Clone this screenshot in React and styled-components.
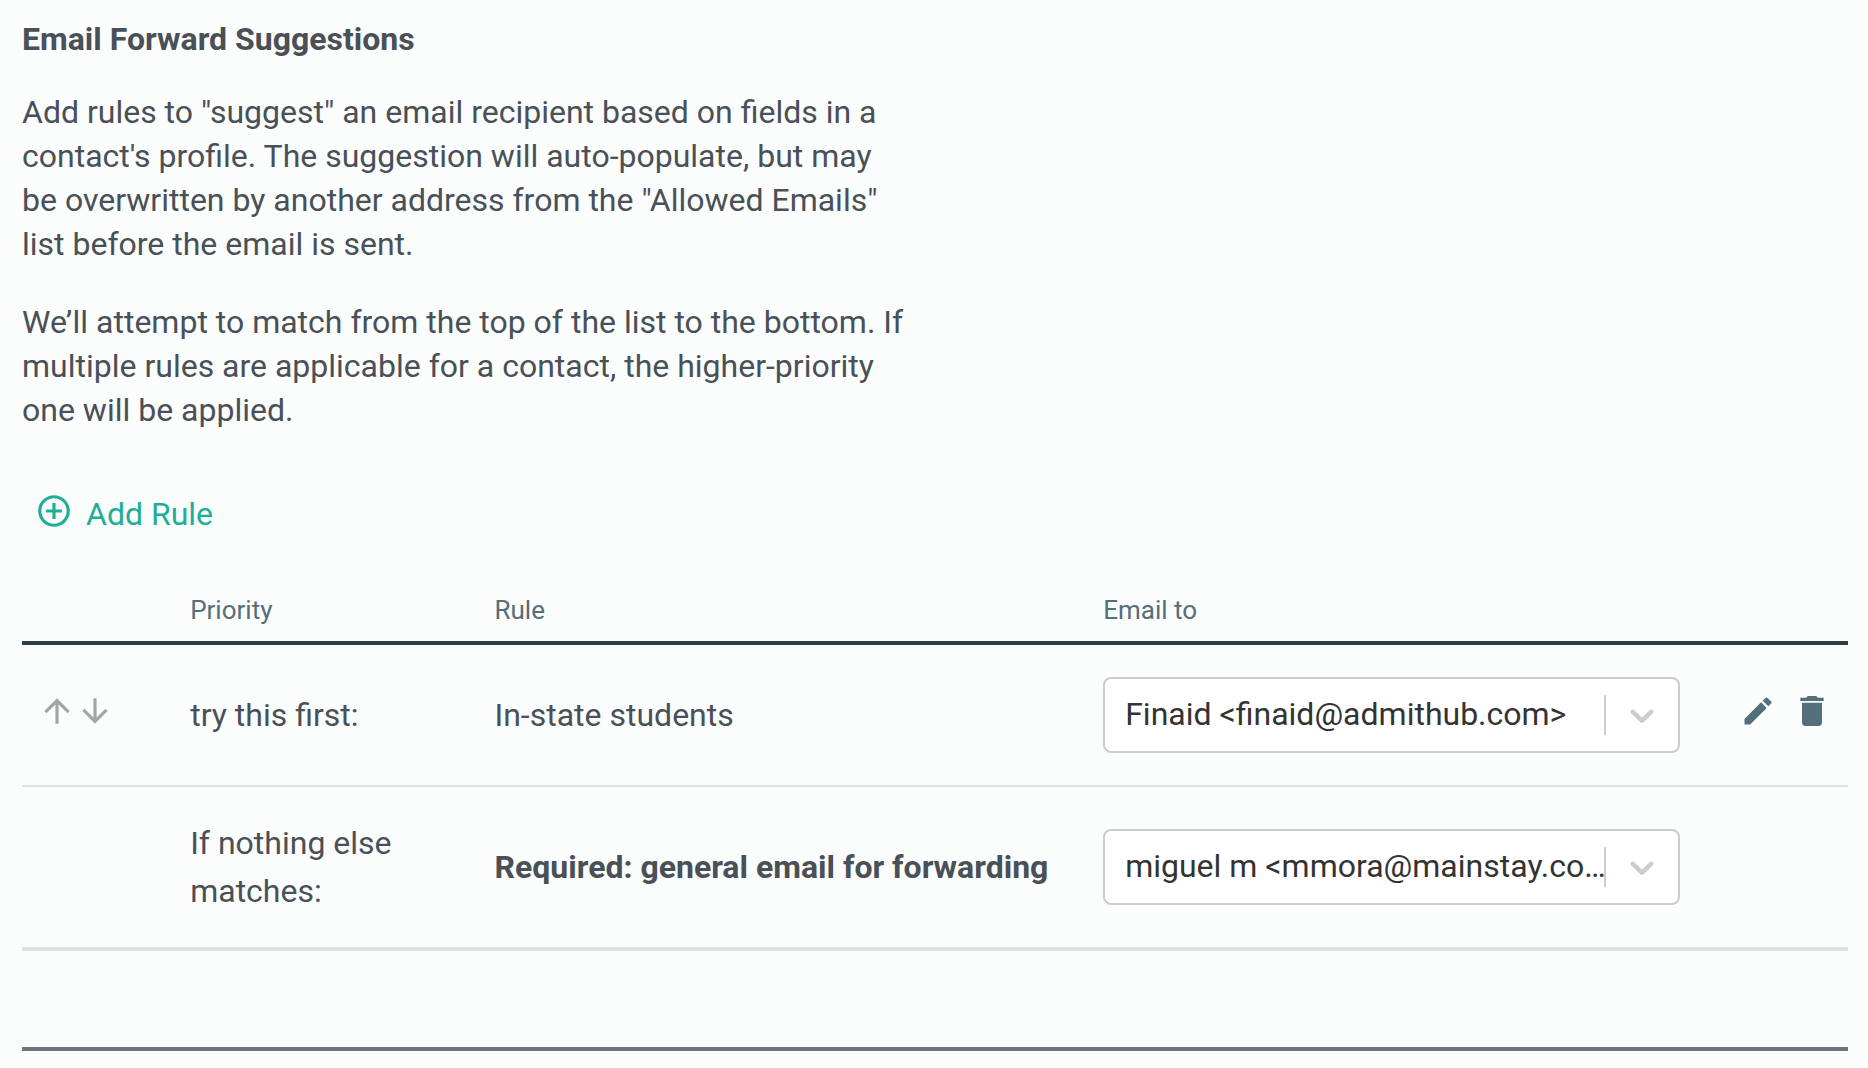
import React from "react";
import styled, { createGlobalStyle } from "styled-components";
import {
  MdAddCircleOutline,
  MdArrowDownward,
  MdArrowUpward,
  MdDelete,
  MdEdit,
} from "react-icons/md";

const GlobalStyle = createGlobalStyle`
  * {
    box-sizing: border-box;
  }
  body {
    margin: 0;
    background: #fbfcfc;
    color: #495057;
    font-family: Roboto, sans-serif;
    font-size: 32px;
    line-height: 44px;
  }
`;

const Page = styled.main`
  padding: 17px 20px 16px 22px;
`;
const Title = styled.h1`
  margin: 0 0 29px;
  font-size: 32px;
  font-weight: 700;
`;
const Description = styled.p`
  max-width: 884px;
  margin: 0 0 34px;
`;
const AddRuleButton = styled.button`
  display: flex;
  align-items: flex-start;
  gap: 13px;
  margin: 60px 0 43px;
  padding: 0 13px;
  border: 0;
  background: none;
  color: #1fae98;
  font: inherit;
  cursor: pointer;
`;
const IconButton = styled.button`
  display: flex;
  padding: 0;
  border: 0;
  background: none;
  color: ${({ $muted }) => ($muted ? "#a3a6a8" : "#546e7a")};
  cursor: pointer;
`;
const Icons = styled.div`
  display: flex;
  align-items: center;
  justify-content: ${({ $end }) => ($end ? "flex-end" : "flex-start")};
  gap: ${({ $end }) => ($end ? "16px" : "0")};
  padding-bottom: 8px;
`;

const Table = styled.table`
  width: 100%;
  table-layout: fixed;
  border-collapse: separate;
  border-spacing: 0;
`;
const Column = styled.col`
  width: calc(100% * ${({ $span }) => $span} / 12);
`;
const HeadCell = styled.th`
  padding: 12px 16px;
  border-bottom: 4px solid #2f3e44;
  color: #546e7a;
  font-size: 26px;
  font-weight: 400;
  line-height: 38px;
  text-align: left;
`;
const Cell = styled.td`
  padding: 32px 16px;
  border-bottom: ${({ $last }) => ($last ? "4px" : "2px")} solid #dee2e6;
  font-weight: ${({ $bold }) => ($bold ? 700 : 400)};
  line-height: 48px;
  vertical-align: middle;
`;

const SelectBox = styled.div`
  display: grid;
  align-items: center;
`;
const Select = styled.select`
  grid-area: 1 / 1;
  width: 100%;
  height: 76px;
  padding: 0 70px 2px 20px;
  appearance: none;
  border: 2px solid #ccc;
  border-radius: 8px;
  background: #fff;
  color: #333;
  font: inherit;
  text-overflow: ellipsis;
`;
const Indicator = styled.span`
  grid-area: 1 / 1;
  justify-self: end;
  display: flex;
  align-items: center;
  height: 40px;
  padding: 0 18px 0 16px;
  border-left: 2px solid #ccc;
  color: #ccc;
  pointer-events: none;
`;
const Divider = styled.hr`
  height: 4px;
  margin: 96px 0 0;
  border: 0;
  background: #6c757d;
`;

const columns = [1, 2, 4, 4, 1];

const rules = [
  {
    id: "in-state",
    priority: "try this first:",
    name: "In-state students",
    email: "Finaid <finaid@admithub.com>",
    editable: true,
  },
  {
    id: "general",
    priority: "If nothing else matches:",
    name: "Required: general email for forwarding",
    email: "miguel m <mmora@mainstay.com>",
    editable: false,
  },
];

const EmailSelect = ({ label, value }) => (
  <SelectBox>
    <Select aria-label={label} defaultValue={value}>
      {rules.map(({ email }) => (
        <option key={email} value={email}>
          {email}
        </option>
      ))}
    </Select>
    <Indicator>
      <svg width="40" height="40" viewBox="0 0 20 20" fill="currentColor">
        <path d="M4.516 7.548c0.436-0.446 1.043-0.481 1.576 0l3.908 3.747 3.908-3.747c0.533-0.481 1.141-0.446 1.574 0 0.436 0.445 0.408 1.197 0 1.615-0.406 0.418-4.695 4.502-4.695 4.502-0.217 0.223-0.502 0.335-0.787 0.335s-0.57-0.112-0.789-0.335c0 0-4.287-4.084-4.695-4.502s-0.436-1.17 0-1.615z" />
      </svg>
    </Indicator>
  </SelectBox>
);

const RuleRow = ({ rule, last }) => (
  <tr>
    <Cell $last={last}>
      {rule.editable && (
        <Icons>
          <IconButton $muted aria-label="Move up">
            <MdArrowUpward size={38} />
          </IconButton>
          <IconButton $muted aria-label="Move down">
            <MdArrowDownward size={38} />
          </IconButton>
        </Icons>
      )}
    </Cell>
    <Cell $last={last}>{rule.priority}</Cell>
    <Cell $last={last} $bold={!rule.editable}>
      {rule.name}
    </Cell>
    <Cell $last={last}>
      <EmailSelect label={`Email to for ${rule.name}`} value={rule.email} />
    </Cell>
    <Cell $last={last}>
      {rule.editable && (
        <Icons $end>
          <IconButton aria-label="Edit rule">
            <MdEdit size={36} />
          </IconButton>
          <IconButton aria-label="Delete rule">
            <MdDelete size={40} />
          </IconButton>
        </Icons>
      )}
    </Cell>
  </tr>
);

const App = () => (
  <>
    <GlobalStyle />
    <Page>
      <Title>Email Forward Suggestions</Title>
      <Description>
        Add rules to "suggest" an email recipient based on fields in a
        contact's profile. The suggestion will auto-populate, but may be
        overwritten by another address from the "Allowed Emails" list before
        the email is sent.
      </Description>
      <Description>
        We’ll attempt to match from the top of the list to the bottom. If
        multiple rules are applicable for a contact, the higher-priority one
        will be applied.
      </Description>
      <AddRuleButton type="button">
        <MdAddCircleOutline size={38} />
        Add Rule
      </AddRuleButton>
      <Table>
        <colgroup>
          {columns.map((span, i) => (
            <Column key={i} $span={span} />
          ))}
        </colgroup>
        <thead>
          <tr>
            <HeadCell />
            <HeadCell>Priority</HeadCell>
            <HeadCell>Rule</HeadCell>
            <HeadCell>Email to</HeadCell>
            <HeadCell />
          </tr>
        </thead>
        <tbody>
          {rules.map((rule, i) => (
            <RuleRow key={rule.id} rule={rule} last={i === rules.length - 1} />
          ))}
        </tbody>
      </Table>
      <Divider />
    </Page>
  </>
);

export default App;
